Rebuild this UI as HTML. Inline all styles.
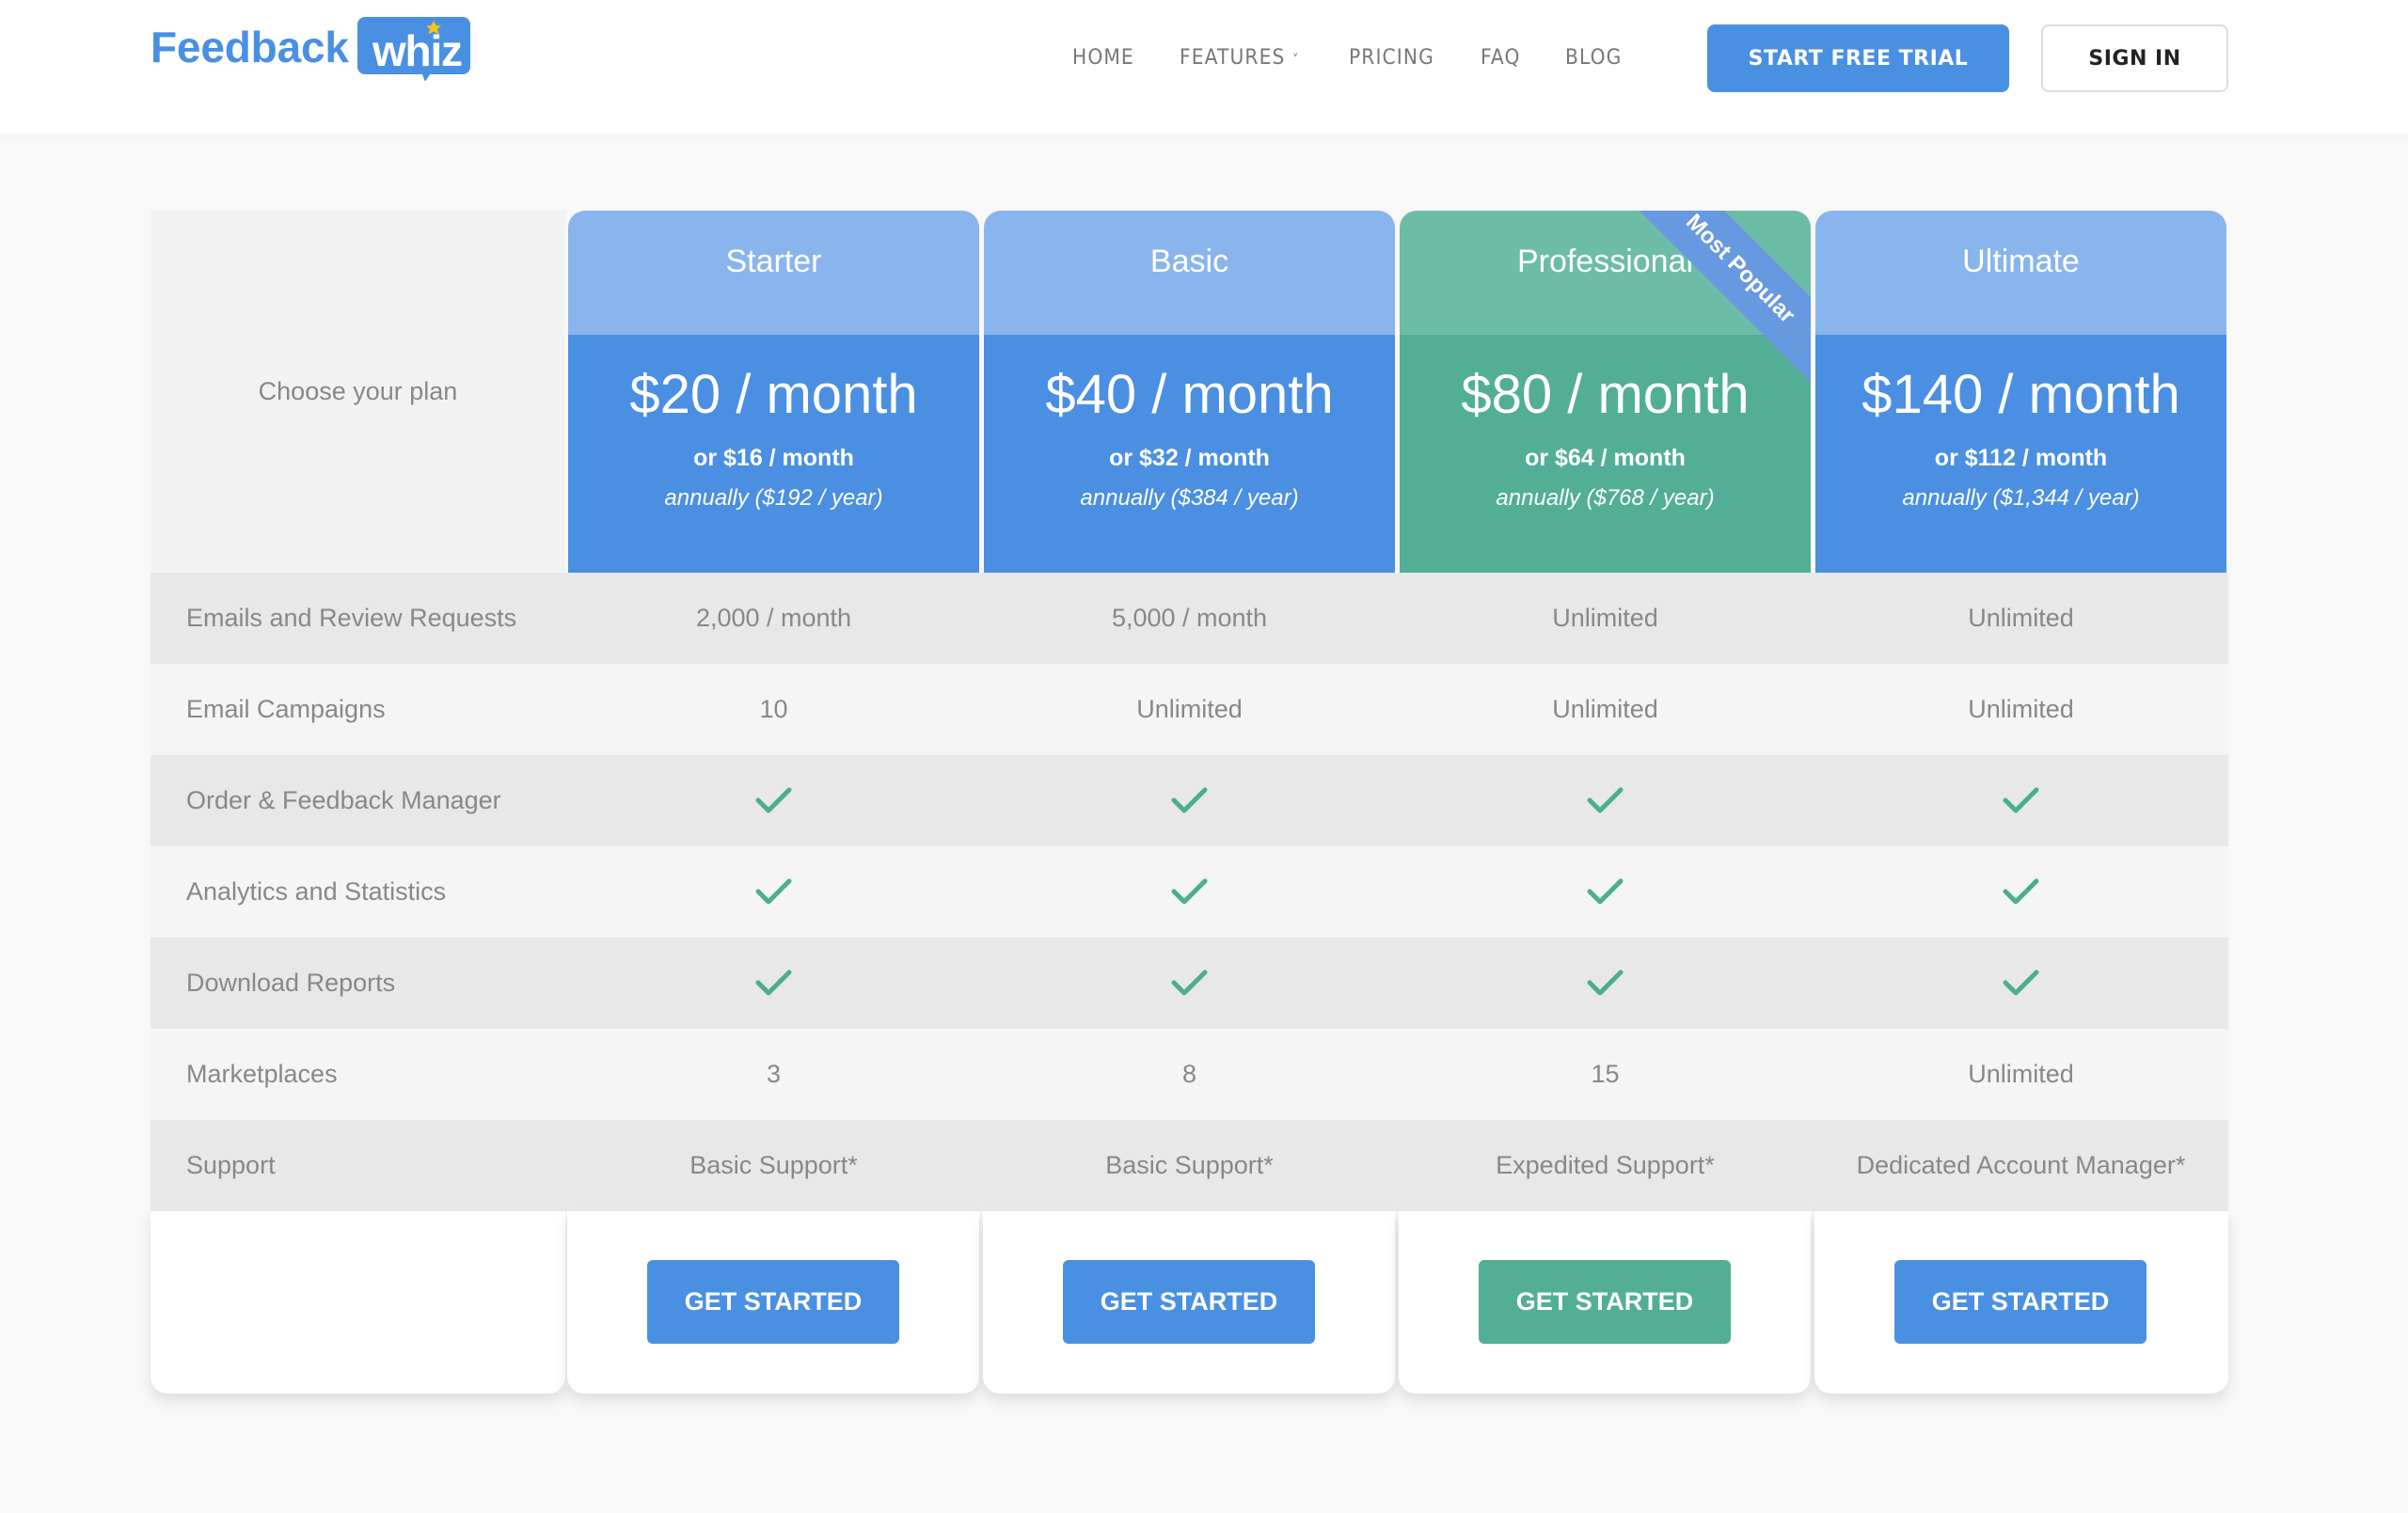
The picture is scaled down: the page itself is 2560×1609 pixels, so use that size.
<!DOCTYPE html>
<html><head><meta charset="utf-8"><style>
*{margin:0;padding:0;box-sizing:border-box}
body{width:2560px;height:1609px;background:#f8f8f8;font-family:"Liberation Sans",sans-serif;position:relative;overflow:hidden}
.hdr{position:absolute;left:0;top:0;width:2560px;height:142px;background:#fff;box-shadow:0 2px 12px rgba(0,0,0,.03)}
.logo{position:absolute;left:160px;top:16px;height:70px}
.nav{position:absolute;top:49px;font-family:"DejaVu Sans",sans-serif;font-size:22px;color:#777;letter-spacing:1.2px;transform:scaleX(.92);transform-origin:left}
.btn1{position:absolute;left:1815px;top:26px;width:321px;height:72px;background:#4a90e2;border-radius:8px;color:#fff;font-family:"DejaVu Sans",sans-serif;font-weight:bold;font-size:22px;letter-spacing:.5px;text-align:center;line-height:74px}
.btn2{position:absolute;left:2170px;top:26px;width:199px;height:72px;background:#fff;border:2px solid #ddd;border-radius:8px;color:#222;font-family:"DejaVu Sans",sans-serif;font-weight:bold;font-size:22px;letter-spacing:.5px;text-align:center;line-height:70px}
.lab{position:absolute;left:160px;top:224px;width:441px;height:385px;background:#f2f2f2;color:#888;font-size:27px;text-align:center;line-height:385px}
.col{position:absolute;top:224px;width:437px;height:385px;border-radius:18px 18px 0 0;overflow:hidden;color:#fff;text-align:center}
.col .t{height:132px;background:#8ab5ec;font-size:34px;line-height:108px}
.col .p{height:253px;background:#4a8fe2}
.col.g .t{background:#6dbda6}.col.g .p{background:#52ae94}
.p .a{font-size:58px;padding-top:24px;line-height:80px}
.p .b{font-size:25px;font-weight:bold;margin-top:13px}
.p .c{font-size:24px;font-style:italic;margin-top:14px}
.rib{position:absolute;left:162px;top:30px;width:400px;height:64px;background:#6699e0;transform:rotate(45deg);color:#fff;font-size:24px;font-weight:bold;line-height:64px;text-align:center}
.row{position:absolute;left:160px;width:2209px;height:97px;color:#888;font-size:27px;line-height:97px}
.row.d{background:#e8e8e8}.row.l{background:#f5f5f5}
.row span{position:absolute;top:0}
.row .n{left:38px}
.row .v{width:437px;text-align:center}
.card{position:absolute;top:1288px;height:194px;background:#fff;border-radius:0 0 18px 18px;box-shadow:0 8px 14px rgba(0,0,0,.1)}
.gs{position:absolute;top:52px;left:85px;width:268px;height:89px;background:#4a90e2;border-radius:6px;color:#fff;font-weight:bold;font-size:27px;text-align:center;line-height:89px}
</style></head><body>
<div class="hdr">
<svg class="logo" viewBox="0 0 340 70" width="340" height="70">
<text x="0" y="50" font-family="Liberation Sans,sans-serif" font-weight="bold" font-size="46" fill="#4a90e2" letter-spacing="-1" textLength="210">Feedback</text>
<path d="M228 2h104a8 8 0 0 1 8 8v45a8 8 0 0 1-8 8h-35l-5 8-3-8h-61a8 8 0 0 1-8-8V10a8 8 0 0 1 8-8z" fill="#4a90e2"/>
<text x="236" y="54" font-family="Liberation Sans,sans-serif" font-weight="bold" font-size="46" fill="#fff" textLength="96">whiz</text>
<polygon points="301,6 303.5,11 309,11.5 305,15 306.5,20.5 301,17.5 295.5,20.5 297,15 293,11.5 298.5,11" fill="#f5c518"/>
</svg>
<div class="nav" style="left:1140px">HOME</div>
<div class="nav" style="left:1254px">FEATURES <span style="font-size:14px">˅</span></div>
<div class="nav" style="left:1434px">PRICING</div>
<div class="nav" style="left:1574px">FAQ</div>
<div class="nav" style="left:1664px">BLOG</div>
<div class="btn1">START FREE TRIAL</div>
<div class="btn2">SIGN IN</div>
</div>

<div class="lab">Choose your plan</div>
<div class="col" style="left:604px"><div class="t">Starter</div><div class="p"><div class="a">$20 / month</div><div class="b">or $16 / month</div><div class="c">annually ($192 / year)</div></div></div>
<div class="col" style="left:1046px"><div class="t">Basic</div><div class="p"><div class="a">$40 / month</div><div class="b">or $32 / month</div><div class="c">annually ($384 / year)</div></div></div>
<div class="col g" style="left:1488px"><div class="t">Professional</div><div class="p"><div class="a">$80 / month</div><div class="b">or $64 / month</div><div class="c">annually ($768 / year)</div></div><div class="rib">Most Popular</div></div>
<div class="col" style="left:1930px"><div class="t">Ultimate</div><div class="p"><div class="a">$140 / month</div><div class="b">or $112 / month</div><div class="c">annually ($1,344 / year)</div></div></div>

<div class="row d" style="top:609px"><span class="n">Emails and Review Requests</span><span class="v" style="left:444px">2,000 / month</span><span class="v" style="left:886px">5,000 / month</span><span class="v" style="left:1328px">Unlimited</span><span class="v" style="left:1770px">Unlimited</span></div>
<div class="row l" style="top:706px"><span class="n">Email Campaigns</span><span class="v" style="left:444px">10</span><span class="v" style="left:886px">Unlimited</span><span class="v" style="left:1328px">Unlimited</span><span class="v" style="left:1770px">Unlimited</span></div>
<div class="row d" style="top:803px"><span class="n">Order &amp; Feedback Manager</span></div>
<div class="row l" style="top:900px"><span class="n">Analytics and Statistics</span></div>
<div class="row d" style="top:997px"><span class="n">Download Reports</span></div>
<div class="row l" style="top:1094px"><span class="n">Marketplaces</span><span class="v" style="left:444px">3</span><span class="v" style="left:886px">8</span><span class="v" style="left:1328px">15</span><span class="v" style="left:1770px">Unlimited</span></div>
<div class="row d" style="top:1191px"><span class="n">Support</span><span class="v" style="left:444px">Basic Support*</span><span class="v" style="left:886px">Basic Support*</span><span class="v" style="left:1328px">Expedited Support*</span><span class="v" style="left:1770px">Dedicated Account Manager*</span></div>

<svg style="position:absolute;left:0;top:0" width="2560" height="1609">
<defs><path id="c" d="M0 12l11 11 22-22" fill="none" stroke="#4cae8c" stroke-width="5" stroke-linecap="round" stroke-linejoin="round"/></defs>
<g>
<use href="#c" x="806" y="839"/><use href="#c" x="1248" y="839"/><use href="#c" x="1690" y="839"/><use href="#c" x="2132" y="839"/>
<use href="#c" x="806" y="936"/><use href="#c" x="1248" y="936"/><use href="#c" x="1690" y="936"/><use href="#c" x="2132" y="936"/>
<use href="#c" x="806" y="1033"/><use href="#c" x="1248" y="1033"/><use href="#c" x="1690" y="1033"/><use href="#c" x="2132" y="1033"/>
</g></svg>

<div class="card" style="left:160px;width:441px"></div>
<div class="card" style="left:603px;width:438px"><div class="gs">GET STARTED</div></div>
<div class="card" style="left:1045px;width:438px"><div class="gs">GET STARTED</div></div>
<div class="card" style="left:1487px;width:438px"><div class="gs" style="background:#52ae94">GET STARTED</div></div>
<div class="card" style="left:1929px;width:440px"><div class="gs">GET STARTED</div></div>
</body></html>
